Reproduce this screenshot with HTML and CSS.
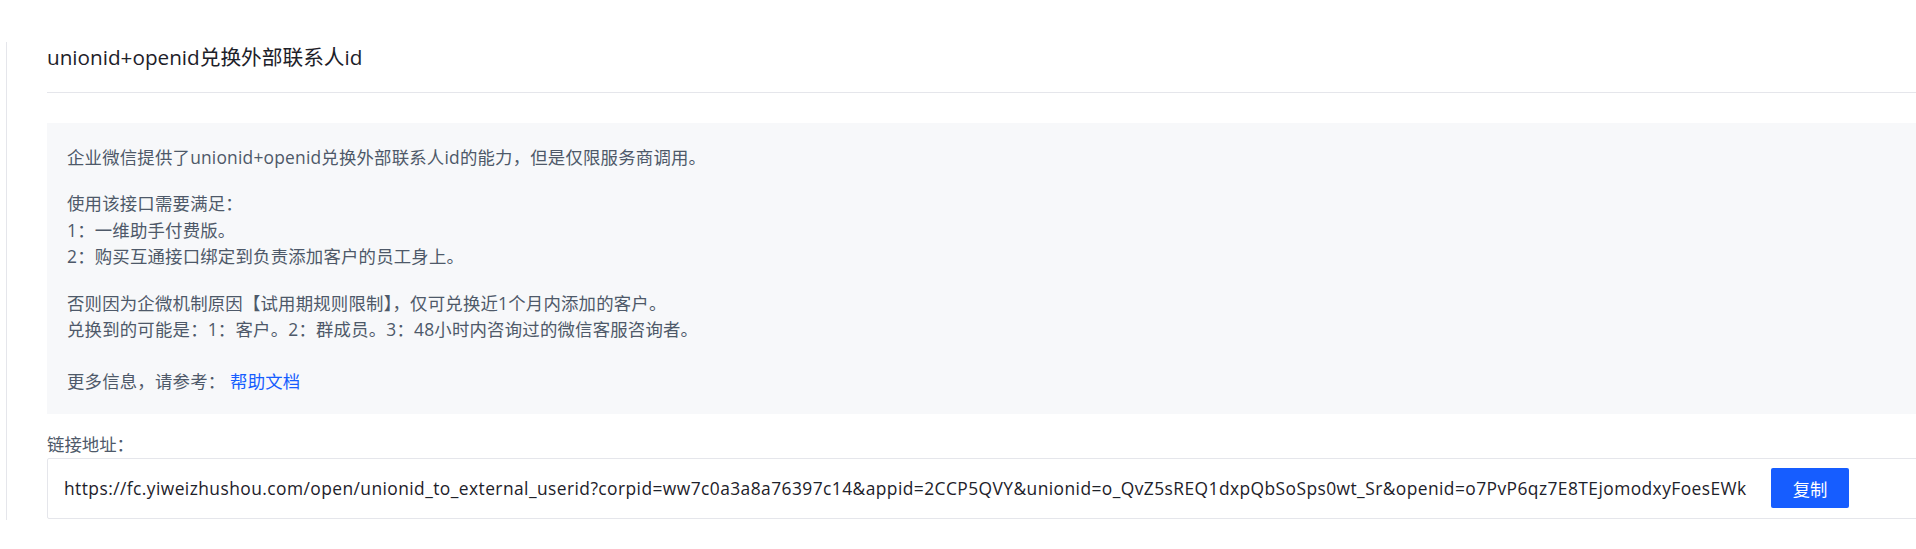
FILE: index.html
```html
<!DOCTYPE html>
<html lang="zh-CN">
<head>
<meta charset="utf-8">
<title>unionid+openid兑换外部联系人id</title>
<link rel="stylesheet" href="styles.css">
</head>
<body>
<div class="panel">
  <div class="panel-header">
    <h1 class="panel-title">unionid+openid兑换外部联系人id</h1>
  </div>
  <div class="notice">
    <p>企业微信提供了unionid+openid兑换外部联系人id的能力，但是仅限服务商调用。</p>
    <p>使用该接口需要满足：<br>1：一维助手付费版。<br>2：购买互通接口绑定到负责添加客户的员工身上。</p>
    <p>否则因为企微机制原因【试用期规则限制】，仅可兑换近1个月内添加的客户。<br>兑换到的可能是：1：客户。2：群成员。3：48小时内咨询过的微信客服咨询者。</p>
    <p class="more">更多信息，请参考： <a class="link" href="#">帮助文档</a></p>
  </div>
  <div class="field-label">链接地址：</div>
  <div class="url-box">
    <span class="url-text">https://fc.yiweizhushou.com/open/unionid_to_external_userid?corpid=ww7c0a3a8a76397c14&amp;appid=2CCP5QVY&amp;unionid=o_QvZ5sREQ1dxpQbSoSps0wt_Sr&amp;openid=o7PvP6qz7E8TEjomodxyFoesEWk</span>
    <button class="copy-btn" type="button">复制</button>
  </div>
</div>
</body>
</html>
```
FILE: styles.css
```css
html, body {
  margin: 0;
  padding: 0;
  background: #ffffff;
  overflow: hidden;
}
body {
  font-family: "Open Sans", "Noto Sans CJK SC", sans-serif;
  color: #4e5969;
  font-size: 17.4px;
  line-height: 26.4px;
}
.panel {
  margin: 42px 0 0 6px;
  width: 1990px;
  box-sizing: border-box;
  border-left: 1px solid #e5e6eb;
  padding-left: 40px;
  padding-bottom: 1px;
}
.panel-header {
  border-bottom: 1px solid #e5e6eb;
  padding-bottom: 20px;
}
.panel-title {
  margin: 0;
  font-size: 20.7px;
  line-height: 30px;
  font-weight: 400;
  color: #1d2129;
}
.notice {
  margin-top: 30px;
  background: #f7f8fa;
  padding: 21px 20px 19px;
  letter-spacing: 0.2px;
}
.notice p {
  margin: 0 0 20px;
}
.notice p.more {
  margin: 26px 0 0;
}
.link {
  color: #165dff;
  text-decoration: none;
}
.field-label {
  margin-top: 17px;
  line-height: 27px;
  color: #4e5969;
}
.url-box {
  display: flex;
  align-items: center;
  height: 61px;
  box-sizing: border-box;
  border: 1px solid #e5e6eb;
  border-radius: 2px;
  padding-left: 16px;
}
.url-text {
  color: #1d2129;
  white-space: nowrap;
  letter-spacing: 0.43px;
}
.copy-btn {
  margin-left: 24px;
  height: 40px;
  padding: 0 22px;
  border: none;
  border-radius: 2px;
  background: #165dff;
  color: #ffffff;
  font-family: "Open Sans", "Noto Sans CJK SC", sans-serif;
  font-size: 17.4px;
}
```
